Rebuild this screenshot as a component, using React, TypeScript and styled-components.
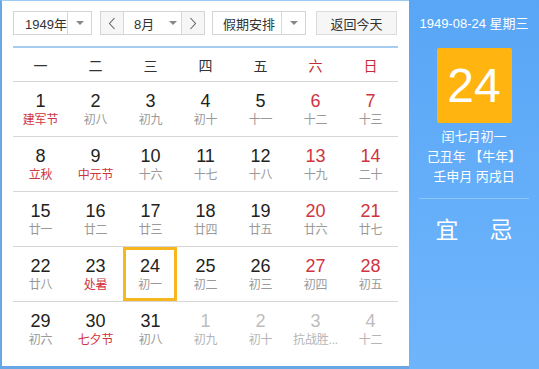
import React, { FC } from 'react';
import styled, { createGlobalStyle, css } from 'styled-components';

const Global = createGlobalStyle`
    html, body {
        margin: 0;
        padding: 0;
        background: #fff;
    }
    body {
        font-family: "Liberation Sans", "Noto Sans CJK SC", sans-serif;
    }
`;

const Wrapper = styled.div`
    display: flex;
    flex-direction: row;
    width: 539px;
    height: 369px;
`;

const Main = styled.div`
    width: 396px;
    padding: 10px 0 10px 11px;
    background: #fff;
    border-left: 2px solid #67a7e6;
    border-top: 1px solid #9ecbf2;
    border-bottom: 3px solid #67a7e6;
`;

const Toolbar = styled.div`
    display: flex;
    flex-direction: row;
    align-items: center;
    height: 24px;
    width: 385px;
    font-size: 13px;
    color: #333;
    padding-bottom: 11px;
    border-bottom: 2px solid #a5cdf0;
`;

const Select = styled.div<{ $width: number; $ml?: number }>`
    display: flex;
    flex-direction: row;
    height: 24px;
    width: ${p => p.$width}px;
    margin-left: ${p => p.$ml || 0}px;
    box-sizing: border-box;
    border: 1px solid #d4d4d4;
    background: #fff;
`;

const SelectLabel = styled.div<{ $pad?: number }>`
    flex: 1;
    display: flex;
    align-items: center;
    padding-left: ${p => p.$pad ?? 11}px;
`;

const ArrowBox = styled.div`
    width: 23px;
    display: flex;
    align-items: center;
    justify-content: center;
    border-left: 1px solid #d8d8d8;
`;

const Caret = styled.span`
    width: 0;
    height: 0;
    border-left: 4px solid transparent;
    border-right: 4px solid transparent;
    border-top: 4px solid #888;
`;

const Step = styled.div<{ $side: 'l' | 'r' }>`
    width: 22px;
    display: flex;
    align-items: center;
    justify-content: center;
    background: #f6f6f6;
    ${p => p.$side === 'l' ? css`border-right: 1px solid #d8d8d8;` : css`border-left: 1px solid #d8d8d8;`}
`;

const MonthMid = styled.div`
    flex: 1;
    display: flex;
    align-items: center;
    padding-left: 10px;
    gap: 15px;
`;

const Button = styled.div`
    margin-left: 10px;
    width: 81px;
    height: 24px;
    box-sizing: border-box;
    border: 1px solid #dcdcdc;
    background: #f6f6f6;
    display: flex;
    align-items: center;
    justify-content: center;
`;

const Week = styled.div`
    display: grid;
    grid-template-columns: repeat(7, 55px);
    height: 33px;
    border-bottom: 1px solid #d6d6d6;
    width: 385px;
`;

const WeekDay = styled.div<{ $red?: boolean }>`
    display: flex;
    align-items: center;
    justify-content: center;
    font-size: 14px;
    color: ${p => p.$red ? '#c22b35' : '#333'};
`;

const Row = styled.div<{ $last?: boolean }>`
    display: grid;
    grid-template-columns: repeat(7, 55px);
    height: 54px;
    width: 385px;
    border-bottom: ${p => p.$last ? 'none' : '1px solid #d6d6d6'};
`;

const Cell = styled.div<{ $today?: boolean }>`
    display: flex;
    flex-direction: column;
    align-items: center;
    box-sizing: border-box;
    padding-top: 9px;
    min-width: 0;
    ${p => p.$today && css`
        width: 54px;
        border: 3px solid #f7b81f;
        padding-top: 6px;
    `}
`;

const Num = styled.div<{ $tone: string }>`
    font-size: 18px;
    line-height: 20px;
    color: ${p => p.$tone};
`;

const Lunar = styled.div<{ $tone: string }>`
    font-size: 12px;
    line-height: 18px;
    white-space: nowrap;
    letter-spacing: -0.2px;
    color: ${p => p.$tone};
`;

const Side = styled.div`
    width: 130px;
    height: 369px;
    background: linear-gradient(#59a6f6, #6fb5fc);
    color: #fff;
    display: flex;
    flex-direction: column;
    align-items: center;
    font-size: 13px;
`;

const DateLine = styled.div`
    margin-top: 15px;
    line-height: 18px;
`;

const DayBox = styled.div`
    margin-top: 15px;
    width: 75px;
    height: 75px;
    border-radius: 2px;
    background: #ffb40f;
    display: flex;
    align-items: center;
    justify-content: center;
    font-size: 48px;
`;

const Info = styled.div`
    margin-top: 4px;
    text-align: center;
    line-height: 20px;
    width: 110px;
    padding-bottom: 11px;
    border-bottom: 1px solid #8fc6fb;
`;

const Luck = styled.div`
    display: flex;
    gap: 31px;
    font-size: 23px;
    margin-top: 12px;
`;

type Day = { n: number; l: string; red?: boolean; fest?: boolean; other?: boolean; today?: boolean };

const rows: Day[][] = [
    [{ n: 1, l: '建军节', fest: true }, { n: 2, l: '初八' }, { n: 3, l: '初九' }, { n: 4, l: '初十' }, { n: 5, l: '十一' }, { n: 6, l: '十二', red: true }, { n: 7, l: '十三', red: true }],
    [{ n: 8, l: '立秋', fest: true }, { n: 9, l: '中元节', fest: true }, { n: 10, l: '十六' }, { n: 11, l: '十七' }, { n: 12, l: '十八' }, { n: 13, l: '十九', red: true }, { n: 14, l: '二十', red: true }],
    [{ n: 15, l: '廿一' }, { n: 16, l: '廿二' }, { n: 17, l: '廿三' }, { n: 18, l: '廿四' }, { n: 19, l: '廿五' }, { n: 20, l: '廿六', red: true }, { n: 21, l: '廿七', red: true }],
    [{ n: 22, l: '廿八' }, { n: 23, l: '处暑', fest: true }, { n: 24, l: '初一', today: true }, { n: 25, l: '初二' }, { n: 26, l: '初三' }, { n: 27, l: '初四', red: true }, { n: 28, l: '初五', red: true }],
    [{ n: 29, l: '初六' }, { n: 30, l: '七夕节', fest: true }, { n: 31, l: '初八' }, { n: 1, l: '初九', other: true }, { n: 2, l: '初十', other: true }, { n: 3, l: '抗战胜...', other: true }, { n: 4, l: '十二', other: true }],
];

const Chevron: FC<{ dir: 'l' | 'r' }> = ({ dir }) => (
    <svg width="8" height="13" viewBox="0 0 8 13">
        <polyline
            points={dir === 'l' ? '6.5,1 1.5,6.5 6.5,12' : '1.5,1 6.5,6.5 1.5,12'}
            fill="none"
            stroke="#666"
            strokeWidth="1.1"
        />
    </svg>
);

export default function App() {
    return (
        <Wrapper>
            <Global />
            <Main>
                <Toolbar>
                    <Select $width={79}>
                        <SelectLabel>1949年</SelectLabel>
                        <ArrowBox><Caret /></ArrowBox>
                    </Select>
                    <Select $width={105} $ml={8}>
                        <Step $side="l"><Chevron dir="l" /></Step>
                        <MonthMid>8月 <Caret /></MonthMid>
                        <Step $side="r"><Chevron dir="r" /></Step>
                    </Select>
                    <Select $width={94} $ml={7}>
                        <SelectLabel $pad={10}>假期安排</SelectLabel>
                        <ArrowBox><Caret /></ArrowBox>
                    </Select>
                    <Button>返回今天</Button>
                </Toolbar>
                <Week>
                    {['一', '二', '三', '四', '五', '六', '日'].map((w, i) => (
                        <WeekDay key={w} $red={i > 4}>{w}</WeekDay>
                    ))}
                </Week>
                {rows.map((row, r) => (
                    <Row key={r} $last={r === rows.length - 1}>
                        {row.map((d, i) => (
                            <Cell key={i} $today={d.today}>
                                <Num $tone={d.other ? '#bdbdbd' : d.red ? '#d0343f' : '#222'}>{d.n}</Num>
                                <Lunar $tone={d.other ? '#b5b5b5' : d.fest ? '#d0343f' : '#999'}>{d.l}</Lunar>
                            </Cell>
                        ))}
                    </Row>
                ))}
            </Main>
            <Side>
                <DateLine>1949-08-24 星期三</DateLine>
                <DayBox>24</DayBox>
                <Info>
                    <div>闰七月初一</div>
                    <div>己丑年 【牛年】</div>
                    <div>壬申月 丙戌日</div>
                </Info>
                <Luck>
                    <span>宜</span>
                    <span>忌</span>
                </Luck>
            </Side>
        </Wrapper>
    );
}
